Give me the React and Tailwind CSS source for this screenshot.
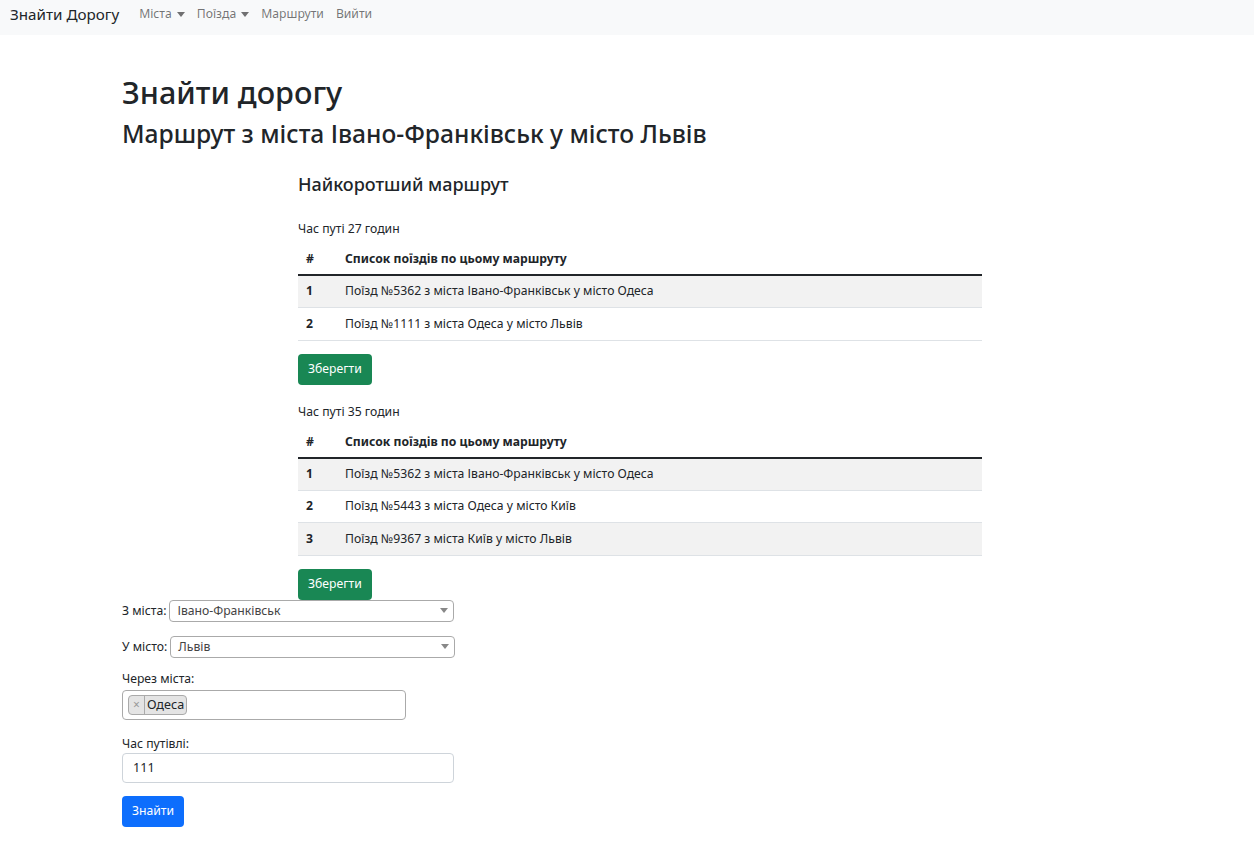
import React from 'react'

const font = { fontFamily: '"Noto Sans", "Open Sans", sans-serif' }

function Caret() {
  return <span className="inline-block ml-[5px] align-middle border-t-[5px] border-t-current border-x-[4px] border-x-transparent" />
}

function RouteTable({ hours, trains }) {
  return (
    <div>
      <p className="text-[12.2px] text-[#212529] h-[18px] leading-[18px] mb-[6px]">Час путі {hours} годин</p>
      <table className="w-full text-[12.2px] text-[#212529]">
        <thead>
          <tr className="h-[31px] border-b-2 border-[#212529]">
            <th className="text-left font-bold px-[8px] w-[39px]">#</th>
            <th className="text-left font-bold px-[8px]">Список поїздів по цьому маршруту</th>
          </tr>
        </thead>
        <tbody>
          {trains.map((t, i) => (
            <tr key={i} className={`h-[32.6px] border-b border-[#dee2e6] ${i % 2 === 0 ? 'bg-[#f2f2f2]' : 'bg-white'}`}>
              <td className="px-[8px] font-bold">{i + 1}</td>
              <td className="px-[8px]">{t}</td>
            </tr>
          ))}
        </tbody>
      </table>
      <button className="mt-[13px] h-[31px] px-[10px] rounded-[4px] bg-[#198754] text-white text-[12.2px]">Зберегти</button>
    </div>
  )
}

function Select2({ value, className }) {
  return (
    <div className={`h-[22px] border border-[#aaa] rounded-[4px] bg-white flex items-center justify-between pl-[7px] pr-[5px] ${className}`}>
      <span className="text-[12.2px] text-[#444]">{value}</span>
      <span className="border-t-[5px] border-t-[#888] border-x-[4px] border-x-transparent" />
    </div>
  )
}

export default function App() {
  return (
    <div className="min-h-screen bg-white" style={font}>
      {/* Navbar */}
      <nav className="h-[35px] bg-[#f8f9fa] flex items-center pl-[10px] pb-[7px]">
        <span className="text-[15.2px] text-[#212529] mr-[20px]">Знайти Дорогу</span>
        <div className="flex items-center gap-[12px] text-[12.2px] text-black/55">
          <span>Міста<Caret /></span>
          <span>Поїзда<Caret /></span>
          <span>Маршрути</span>
          <span>Вийти</span>
        </div>
      </nav>

      <div className="pl-[122px]">
        <h2 className="mt-[38px] text-[30.6px] leading-[38px] font-medium text-[#212529]">Знайти дорогу</h2>
        <h4 className="mt-[8px] text-[24.6px] leading-[29px] font-medium text-[#212529]">Маршрут з міста Івано-Франківськ у місто Львів</h4>

        <div className="ml-[176px] w-[684px]">
          <h5 className="mt-[24px] mb-[24px] text-[18px] leading-[24px] font-medium text-[#212529]">Найкоротший маршрут</h5>
          <RouteTable
            hours={27}
            trains={[
              'Поїзд №5362 з міста Івано-Франківськ у місто Одеса',
              'Поїзд №1111 з міста Одеса у місто Львів',
            ]}
          />
          <div className="mt-[18px]">
            <RouteTable
              hours={35}
              trains={[
                'Поїзд №5362 з міста Івано-Франківськ у місто Одеса',
                'Поїзд №5443 з міста Одеса у місто Київ',
                'Поїзд №9367 з міста Київ у місто Львів',
              ]}
            />
          </div>
        </div>

        {/* Form */}
        <div className="text-[12.2px] text-[#212529]">
          <div className="flex items-center">
            <label className="mr-[3px]">З міста:</label>
            <Select2 value="Івано-Франківськ" className="w-[285px]" />
          </div>
          <div className="flex items-center mt-[14px]">
            <label className="mr-[3px]">У місто:</label>
            <Select2 value="Львів" className="w-[285px]" />
          </div>
          <label className="block mt-[12px] leading-[18px]">Через міста:</label>
          <div className="mt-[2px] w-[284px] h-[30px] border border-[#aaa] rounded-[4px] flex items-center pl-[5px]">
            <span className="flex items-center h-[20px] border border-[#aaa] rounded-[4px] bg-[#e4e4e4]">
              <span className="px-[4px] text-[#999] border-r border-[#aaa] h-full flex items-center text-[12px]">×</span>
              <span className="px-[2px] text-[12.6px]">Одеса</span>
            </span>
          </div>
          <label className="block mt-[15px] leading-[18px]">Час путівлі:</label>
          <div className="w-[332px] h-[30px] border border-[#ced4da] rounded-[4px] flex items-center pl-[10px] text-[12.6px]">111</div>
          <button className="mt-[13px] mb-[18px] h-[31px] px-[10px] rounded-[4px] bg-[#0d6efd] text-white text-[12.2px]">Знайти</button>
        </div>
      </div>
    </div>
  )
}
